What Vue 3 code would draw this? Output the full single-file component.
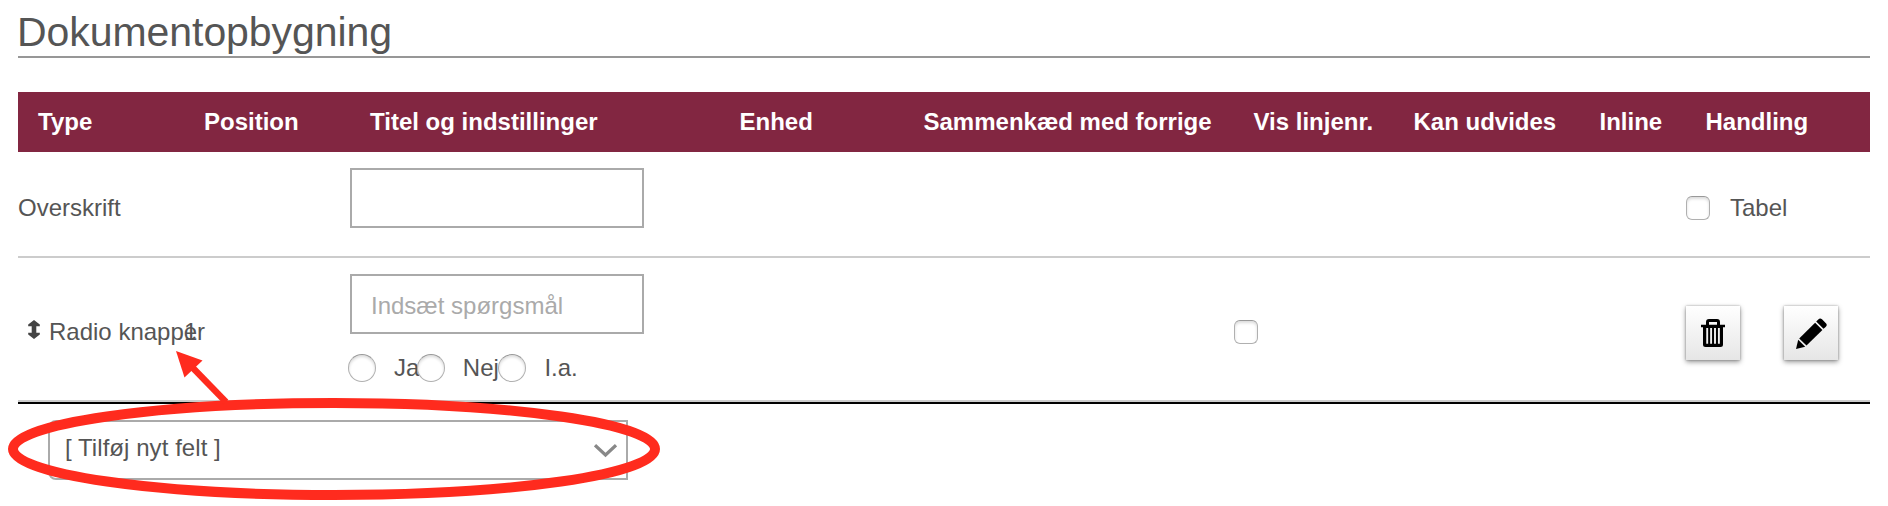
<template>
  <main class="builder">
    <h1 class="builder__title">Dokumentopbygning</h1>

    <div class="fields">
      <div class="fields__row fields__row--head">
        <span v-for="column in columns" :key="column">{{ column }}</span>
      </div>

      <div class="fields__row fields__row--heading">
        <span>Overskrift</span>
        <input v-model="heading" class="text-input" type="text" />
        <label class="table-toggle">
          <input v-model="asTable" class="checkbox" type="checkbox" />
          <span>Tabel</span>
        </label>
      </div>

      <div class="fields__row fields__row--radio">
        <div class="field-type">
          <svg class="field-type__handle" width="12" height="19" viewBox="0 0 12 19">
            <path d="M6 0L11.8 4.6V6.3H8.3V12.7H11.8V14.4L6 19L.2 14.4V12.7H3.7V6.3H.2V4.6Z" />
          </svg>
          <span>Radio knapper</span>
        </div>
        <span class="position">1</span>
        <div class="settings">
          <input v-model="question" class="text-input" type="text" placeholder="Indsæt spørgsmål" />
          <div class="options">
            <label v-for="option in options" :key="option" class="option">
              <input v-model="answer" class="radio" type="radio" name="answer" :value="option" />
              <span>{{ option }}</span>
            </label>
          </div>
        </div>
        <input v-model="lineNumber" class="checkbox checkbox--line" type="checkbox" />
        <div class="actions">
          <button class="icon-button" type="button" aria-label="Slet">
            <svg width="24" height="28" viewBox="0 0 24 28">
              <path d="M6.5 6V3Q6.5 1.5 8 1.5H16Q17.5 1.5 17.5 3V6" fill="none" stroke="#000" stroke-width="3" />
              <path d="M0 5.7H24V8.3H22V25.5Q22 28 19.5 28H4.5Q2 28 2 25.5V8.3H0Z" />
              <path d="M6.2 9V24.8M10.1 9V24.8M14 9V24.8M17.9 9V24.8" stroke="#f1f1f1" stroke-width="1.9" />
            </svg>
          </button>
          <button class="icon-button" type="button" aria-label="Rediger">
            <svg width="31" height="31" viewBox="0 0 31 31">
              <path d="M22.3 1.6Q24 -.6 26 1.3L29.9 5.2Q31.7 7.1 29.6 8.9L27.5 10.8L20.2 3.6Z" />
              <path d="M19.1 4.8L26.4 12L10.5 27.5L3.2 20.4Z" />
              <path d="M2.2 21.8L9.2 28.8L0 31Z" />
            </svg>
          </button>
        </div>
      </div>
    </div>

    <div class="new-field">
      <span>[ Tilføj nyt felt ]</span>
      <svg width="23" height="14" viewBox="0 0 23 14">
        <path d="M1 1.2L11.5 11L22 1.2" fill="none" stroke="#888" stroke-width="3.2" />
      </svg>
    </div>

    <svg class="annotation" width="670" height="506" viewBox="0 0 670 506">
      <ellipse cx="334" cy="449" rx="321" ry="46" fill="none" stroke="#ff2b1e" stroke-width="10" />
      <path d="M192 367L226 402" stroke="#ff2b1e" stroke-width="6.5" />
      <path d="M176 351L202.5 360.5L184.5 377.5Z" fill="#ff2b1e" />
    </svg>
  </main>
</template>

<script setup>
import { ref } from 'vue'

const columns = [
  'Type',
  'Position',
  'Titel og indstillinger',
  'Enhed',
  'Sammenkæd med forrige',
  'Vis linjenr.',
  'Kan udvides',
  'Inline',
  'Handling',
]
const options = ['Ja', 'Nej', 'I.a.']

const heading = ref('')
const question = ref('')
const answer = ref('')
const asTable = ref(false)
const lineNumber = ref(false)
</script>

<style>
body {
  margin: 0;
  background: #fff;
}
</style>

<style scoped>
.builder {
  position: relative;
  box-sizing: border-box;
  height: 506px;
  padding: 6px 18px 0;
  overflow: hidden;
  color: #555;
  font-family: 'Liberation Sans', Arial, sans-serif;
  font-size: 24px;
  line-height: 28px;
}

.builder__title {
  box-sizing: border-box;
  height: 52px;
  margin: 0 0 34px;
  border-bottom: 2px solid #979797;
  font-size: 41px;
  font-weight: 400;
  line-height: 52px;
  letter-spacing: -0.06px;
  text-indent: -1px;
}

.fields {
  border-bottom: 2px solid #000;
}

.fields__row {
  display: grid;
  grid-template-columns: 166px 166px 369.5px 184px 330px 160px 186px 106px 1fr;
  align-items: center;
  box-sizing: border-box;
  border-bottom: 2px solid #ccc;
  white-space: nowrap;
}

.fields__row--head {
  height: 60px;
  border: 0;
  background: #822641;
  color: #fff;
  font-weight: 700;
}

.fields__row--head span {
  padding-left: 20px;
}

.fields__row--heading {
  height: 106px;
  padding-top: 8px;
}

.fields__row--heading .text-input {
  grid-column: 3;
  align-self: start;
  margin-top: 8px;
}

.fields__row--radio {
  height: 144px;
  padding-top: 6px;
}

.text-input {
  display: block;
  box-sizing: border-box;
  width: 294px;
  height: 60px;
  margin: 0;
  padding: 3px 19px 0;
  border: 2px solid #aaa;
  border-radius: 0;
  outline: 0;
  background: #fff;
  color: inherit;
  font: inherit;
}

.text-input::placeholder {
  color: #aaa;
  opacity: 1;
}

.checkbox,
.radio {
  flex: none;
  appearance: none;
  box-sizing: border-box;
  margin: 0;
  border: 1.5px solid #b0b0b0;
  border-top-color: #999;
  background: #fff;
  box-shadow: inset 0 2px 3px rgba(0, 0, 0, 0.14);
}

.checkbox {
  width: 24px;
  height: 24px;
  border-radius: 6px;
}

.radio {
  width: 28px;
  height: 28px;
  border-radius: 50%;
}

.table-toggle {
  display: flex;
  grid-column: 9;
  align-items: center;
  gap: 20px;
  padding-left: 0.5px;
}

.field-type {
  display: flex;
  align-items: center;
  gap: 9px;
  padding-left: 10px;
}

.field-type__handle {
  flex: none;
  margin-top: -5px;
  fill: #444;
}

.settings {
  align-self: start;
  margin-top: 10px;
}

.options {
  display: flex;
  margin: 20px 0 0 -2px;
}

.option {
  display: flex;
  gap: 18px;
}

/* The option labels run in under the next radio. */
.option + .option {
  margin-left: -2.5px;
}

.option + .option .radio {
  position: relative;
}

.option:last-child {
  padding-left: 2px;
}

.checkbox--line {
  grid-column: 6;
  margin-left: 0.5px;
}

.actions {
  display: flex;
  grid-column: 9;
  gap: 44px;
  padding: 2px 0 0 0.5px;
}

.icon-button {
  display: flex;
  align-items: center;
  justify-content: center;
  width: 54px;
  height: 54px;
  padding: 0;
  border: 0;
  background: linear-gradient(#fff, #e6e6e6);
  box-shadow:
    0 0 2px rgba(0, 0, 0, 0.3),
    0 2px 5px rgba(0, 0, 0, 0.42);
}

.new-field {
  display: flex;
  align-items: center;
  justify-content: space-between;
  box-sizing: border-box;
  width: 580px;
  height: 60px;
  margin: 16px 0 0 30px;
  padding: 0 9px 4px 15px;
  border: 2px solid #aaa;
  border-radius: 8px 0 0 8px;
  letter-spacing: 0.06px;
}

.new-field svg {
  margin-top: 6px;
}

.annotation {
  position: absolute;
  top: 0;
  left: 0;
  pointer-events: none;
}
</style>
